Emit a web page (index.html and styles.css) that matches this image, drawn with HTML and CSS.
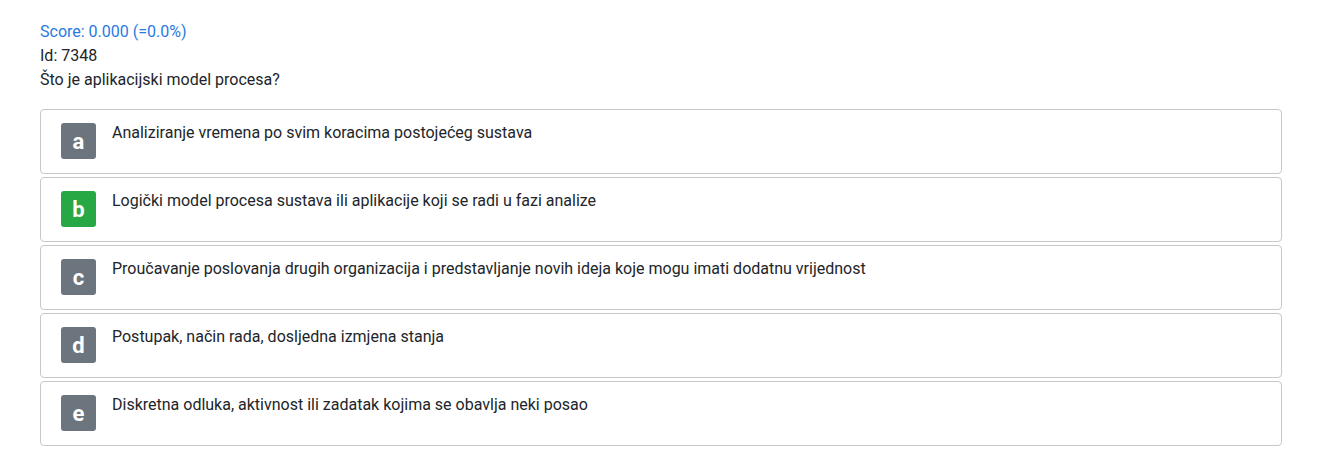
FILE: index.html
```html
<!DOCTYPE html>
<html>
<head>
<meta charset="utf-8">
<link rel="stylesheet" href="styles.css">
</head>
<body>
<div class="page">
  <div class="score">Score: 0.000 (=0.0%)</div>
  <div class="meta">Id: 7348</div>
  <div class="question">Što je aplikacijski model procesa?</div>
  <div class="answers">
    <div class="answer"><span class="badge">a</span><span class="text">Analiziranje vremena po svim koracima postojećeg sustava</span></div>
    <div class="answer"><span class="badge correct">b</span><span class="text">Logički model procesa sustava ili aplikacije koji se radi u fazi analize</span></div>
    <div class="answer"><span class="badge">c</span><span class="text">Proučavanje poslovanja drugih organizacija i predstavljanje novih ideja koje mogu imati dodatnu vrijednost</span></div>
    <div class="answer"><span class="badge">d</span><span class="text">Postupak, način rada, dosljedna izmjena stanja</span></div>
    <div class="answer"><span class="badge">e</span><span class="text">Diskretna odluka, aktivnost ili zadatak kojima se obavlja neki posao</span></div>
  </div>
</div>
</body>
</html>
```
FILE: styles.css
```css
html, body { margin: 0; padding: 0; background: #fff; }
body {
  font-family: Roboto, "Open Sans", "Liberation Sans", sans-serif;
  font-size: 16px;
  color: #212529;
}
.page { padding: 20px 43px 0 40px; }
.score, .meta, .question { line-height: 24px; }
.score { color: #2a7ae2; }
.answers { display: flex; flex-direction: column; gap: 3px; margin-top: 17px; }
.answer {
  display: flex;
  align-items: flex-start;
  gap: 16px;
  height: 63px;
  box-sizing: content-box;
  border: 1px solid #c8c8c8;
  border-radius: 4px;
  padding: 0 20px;
}
.badge {
  flex: none;
  width: 35px;
  height: 36px;
  margin-top: 13px;
  border-radius: 3px;
  background: #6c757d;
  color: #fff;
  font-weight: 700;
  font-size: 22px;
  display: flex;
  align-items: center;
  justify-content: center;
}
.badge.correct { background: #28a745; }
.text { margin-top: 13px; line-height: 20px; }
```
